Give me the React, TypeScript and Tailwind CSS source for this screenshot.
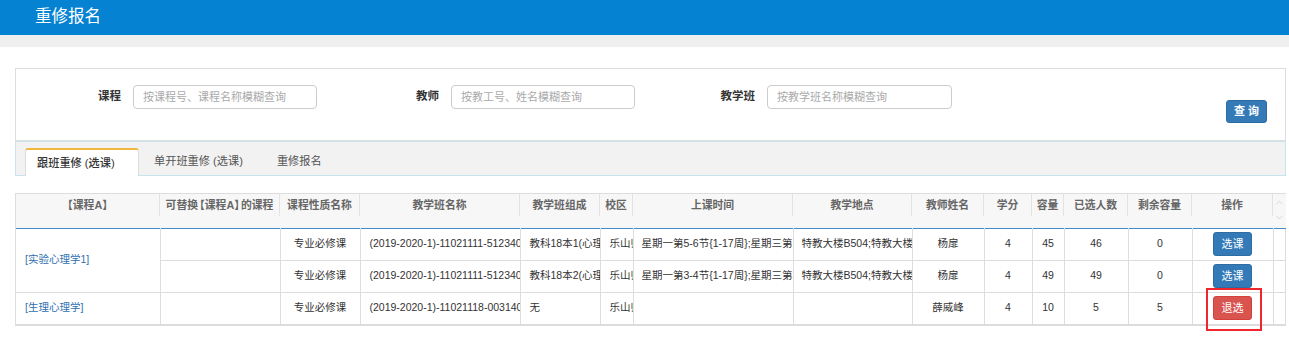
import React from "react";
import { ChevronUp, ChevronDown } from "lucide-react";

const widths = [144, 120, 80, 160, 80, 33, 160, 119, 72, 48, 32, 64, 64, 81, 13];

const L = ({ c }: { c: string }) => <span className="inline-block -ml-[4px]">{c}</span>;
const R = ({ c }: { c: string }) => <span className="inline-block -mr-[4px]">{c}</span>;

const headers: React.ReactNode[] = [
  <>
    <L c="【" />课程A<R c="】" />
  </>,
  <>
    可替换<L c="【" />课程A<R c="】" />的课程
  </>,
  "课程性质名称",
  "教学班名称",
  "教学班组成",
  "校区",
  "上课时间",
  "教学地点",
  "教师姓名",
  "学分",
  "容量",
  "已选人数",
  "剩余容量",
  "操作",
];

type Row = {
  nature: string;
  name: string;
  comp: string;
  campus: string;
  time: string;
  place: string;
  teacher: string;
  credit: string;
  cap: string;
  sel: string;
  rest: string;
  action: "select" | "drop";
};

const rows: Row[] = [
  {
    nature: "专业必修课",
    name: "(2019-2020-1)-11021111-51234001",
    comp: "教科18本1(心理学)",
    campus: "乐山师范学院",
    time: "星期一第5-6节{1-17周};星期三第1-2节{1-17周}",
    place: "特教大楼B504;特教大楼B504",
    teacher: "杨扉",
    credit: "4",
    cap: "45",
    sel: "46",
    rest: "0",
    action: "select",
  },
  {
    nature: "专业必修课",
    name: "(2019-2020-1)-11021111-51234002",
    comp: "教科18本2(心理学)",
    campus: "乐山师范学院",
    time: "星期一第3-4节{1-17周};星期三第3-4节{1-17周}",
    place: "特教大楼B504;特教大楼B504",
    teacher: "杨扉",
    credit: "4",
    cap: "49",
    sel: "49",
    rest: "0",
    action: "select",
  },
  {
    nature: "专业必修课",
    name: "(2019-2020-1)-11021118-00314001",
    comp: "无",
    campus: "乐山师范学院",
    time: "",
    place: "",
    teacher: "薛威峰",
    credit: "4",
    cap: "10",
    sel: "5",
    rest: "5",
    action: "drop",
  },
];

const td = "border-r border-[#dddddd] overflow-hidden whitespace-nowrap h-[32px] p-0";
const tdB = "border-b border-[#dddddd]";

export default function App() {
  return (
    <div className="w-[1289px] h-[355px] bg-white font-['Liberation_Sans','Noto_Sans_CJK_SC',sans-serif] text-[#333] overflow-hidden">
      {/* top bar */}
      <div className="h-[35px] bg-[#0582d2] pl-[35px] flex items-center text-white text-[16.5px] leading-none pb-[2px]">
        重修报名
      </div>
      <div className="h-[12px] bg-[#efefef]" />

      <div className="pl-[15px] pr-[3px] pt-[21px]">
        {/* search panel */}
        <div className="border border-[#dddddd] h-[73px] flex items-start">
          <div className="flex items-center mt-[16px]">
            <div className="flex items-center w-[301px]">
              <label className="flex-1 text-right text-[11.5px] font-bold text-[#333]">课程</label>
              <input
                className="ml-[12px] w-[184px] h-[24px] border border-[#cccccc] rounded-[4px] px-[9px] text-[11px] placeholder:text-[#aaaaaa] outline-none"
                placeholder="按课程号、课程名称模糊查询"
              />
            </div>
            <div className="flex items-center w-[318px]">
              <label className="flex-1 text-right text-[11.5px] font-bold text-[#333]">教师</label>
              <input
                className="ml-[12px] w-[184px] h-[24px] border border-[#cccccc] rounded-[4px] px-[9px] text-[11px] placeholder:text-[#aaaaaa] outline-none"
                placeholder="按教工号、姓名模糊查询"
              />
            </div>
            <div className="flex items-center w-[317px]">
              <label className="flex-1 text-right text-[11.5px] font-bold text-[#333]">教学班</label>
              <input
                className="ml-[12px] w-[185px] h-[24px] border border-[#cccccc] rounded-[4px] px-[9px] text-[11px] placeholder:text-[#aaaaaa] outline-none"
                placeholder="按教学班名称模糊查询"
              />
            </div>
          </div>
          <button className="ml-auto mr-[18px] mt-[31px] w-[41px] h-[23px] bg-[#337ab7] border border-[#2e6da4] rounded-[3px] text-white text-[11px] font-bold leading-none">
            查 询
          </button>
        </div>

        {/* tabs */}
        <div className="border border-[#c8e5ee] bg-[#f2f2f2] h-[35px] flex items-end pl-[9px] text-[11.2px] text-[#555]">
          <div className="w-[114px] h-[28px] bg-white border-t-2 border-t-[#f0b840] border-x border-x-[#dddddd] rounded-t-[3px] flex items-center pl-[11px] text-[#333] font-medium -mb-px">
            跟班重修 (选课)
          </div>
          <div className="h-[28px] flex items-center pl-[15px] pr-[17px]">单开班重修 (选课)</div>
          <div className="h-[28px] flex items-center pl-[17px]">重修报名</div>
        </div>

        {/* table */}
        <div className="relative mt-[17px] w-[1271px] border border-[#dddddd] border-b-2 border-b-[#dcdcdc]">
          <table className="table-fixed border-collapse w-[1270px] text-[10.5px]">
            <colgroup>
              {widths.map((w, i) => (
                <col key={i} style={{ width: w }} />
              ))}
            </colgroup>
            <thead>
              <tr className="bg-[#f7f7f7] h-[34px] border-b border-b-[#428bca]">
                {headers.map((h, i) => (
                  <th key={i} className="p-0 align-top font-bold text-[#666] text-[10.8px]">
                    <div className="h-[22px] flex items-center justify-center overflow-hidden whitespace-nowrap border-r border-[#e3e3e3]">
                      {h}
                    </div>
                  </th>
                ))}
                <th className="p-0 align-top">
                  <div className="flex flex-col items-center pt-[3px] text-[#c8c8c8]">
                    <ChevronUp size={11} strokeWidth={1.5} />
                    <ChevronDown size={11} strokeWidth={1.5} className="mt-[4px]" />
                  </div>
                </th>
              </tr>
            </thead>
            <tbody>
              {rows.map((r, i) => {
                const last = i === rows.length - 1;
                const b = last ? "" : tdB;
                return (
                  <tr key={i}>
                    {i === 0 && (
                      <td rowSpan={2} className={`${td} ${tdB} pl-[9px] text-[#2f6fb0]`}>
                        [实验心理学1]
                      </td>
                    )}
                    {i === 2 && <td className={`${td} pl-[9px] text-[#2f6fb0]`}>[生理心理学]</td>}
                    <td className={`${td} ${b}`} />
                    <td className={`${td} ${b} text-center`}>{r.nature}</td>
                    <td className={`${td} ${b} pl-[9px]`}>{r.name}</td>
                    <td className={`${td} ${b} pl-[9px]`}>{r.comp}</td>
                    <td className={`${td} ${b} pl-[9px]`}>{r.campus}</td>
                    <td className={`${td} ${b} pl-[8px]`}>{r.time}</td>
                    <td className={`${td} ${b} pl-[8px]`}>{r.place}</td>
                    <td className={`${td} ${b} text-center`}>{r.teacher}</td>
                    <td className={`${td} ${b} text-center`}>{r.credit}</td>
                    <td className={`${td} ${b} text-center`}>{r.cap}</td>
                    <td className={`${td} ${b} text-center`}>{r.sel}</td>
                    <td className={`${td} ${b} text-center`}>{r.rest}</td>
                    <td className={`${td} ${b} text-center`}>
                      <button
                        className={`w-[39px] h-[24px] rounded-[3px] text-white text-[11px] leading-none align-middle ${
                          r.action === "select"
                            ? "bg-[#337ab7] border border-[#2e6da4]"
                            : "bg-[#d9534f] border border-[#d43f3a]"
                        }`}
                      >
                        {r.action === "select" ? "选课" : "退选"}
                      </button>
                    </td>
                    <td className={`p-0 ${b}`} />
                  </tr>
                );
              })}
            </tbody>
          </table>
          {/* annotation highlight */}
          <div className="absolute left-[1190px] top-[94px] w-[56px] h-[43px] border-2 border-[#f0262d] pointer-events-none" />
        </div>
      </div>
    </div>
  );
}
